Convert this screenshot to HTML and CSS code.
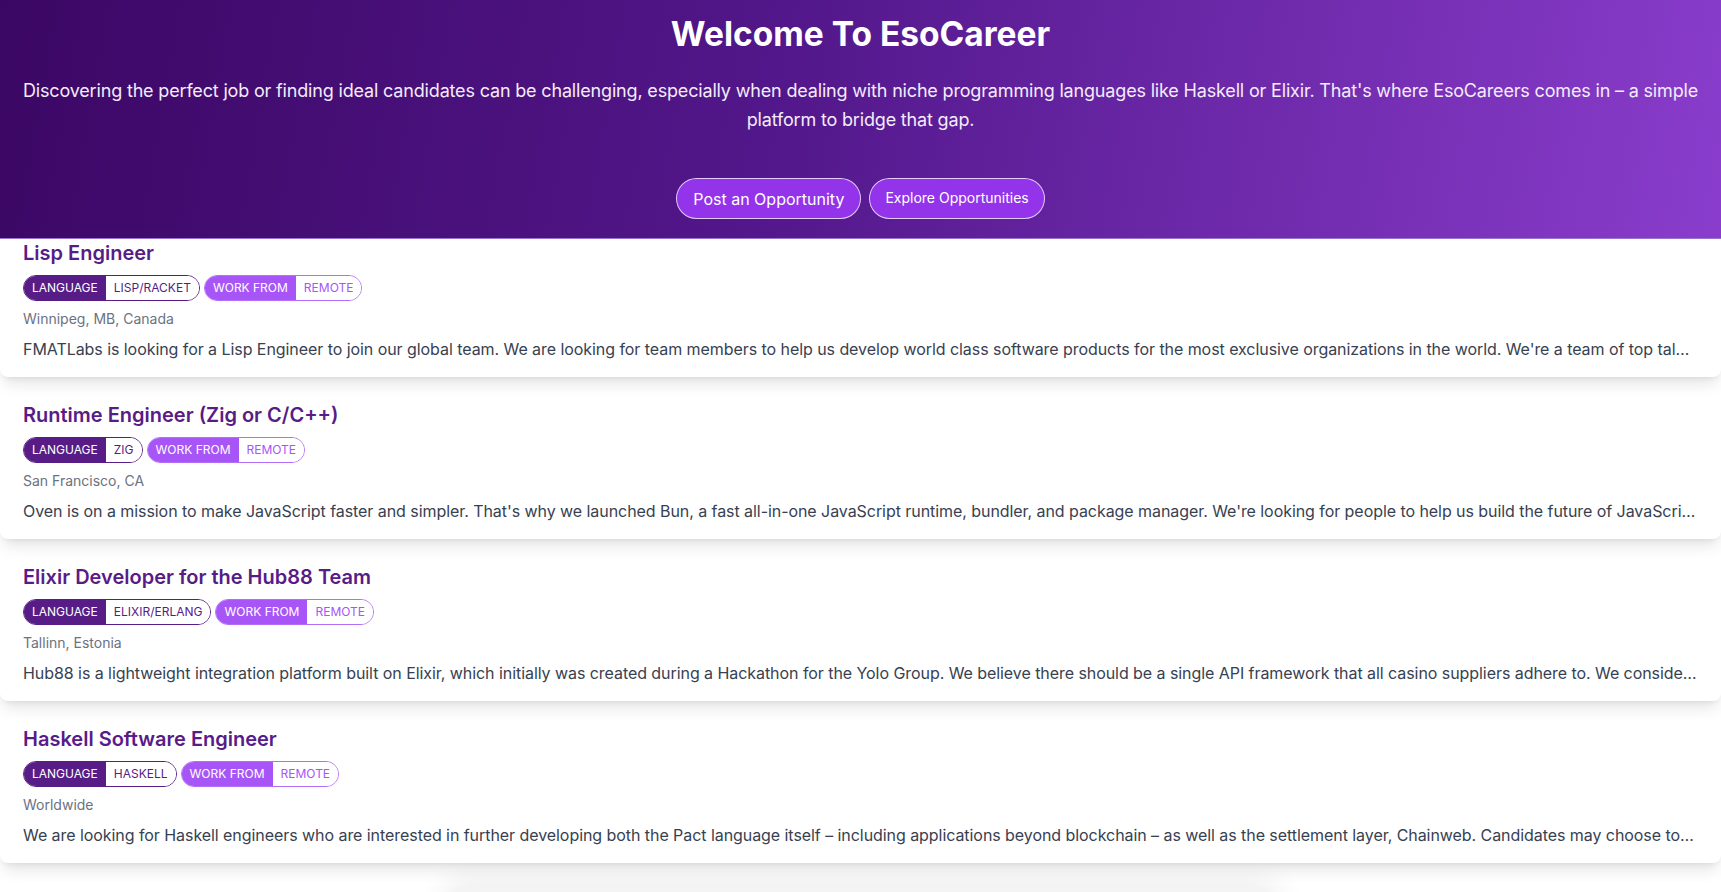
FILE: index.html
```html
<!DOCTYPE html>
<html lang="en">
<head>
<meta charset="utf-8">
<title>EsoCareer</title>
<link rel="stylesheet" href="styles.css">
</head>
<body>
<header class="hero">
  <h1 class="hero-title">Welcome To EsoCareer</h1>
  <p class="hero-text">Discovering the perfect job or finding ideal candidates can be challenging, especially when dealing with niche programming languages like Haskell or Elixir. That's where EsoCareers comes in – a simple platform to bridge that gap.</p>
  <div class="hero-actions">
    <a class="btn btn-post" href="#">Post an Opportunity</a>
    <a class="btn btn-explore" href="#">Explore Opportunities</a>
  </div>
</header>
<main class="jobs">
  <article class="card">
    <h2 class="card-title">Lisp Engineer</h2>
    <div class="tags">
      <span class="tag tag-lang"><span class="tag-key">Language</span><span class="tag-val">Lisp/Racket</span></span>
      <span class="tag tag-work"><span class="tag-key">Work from</span><span class="tag-val">Remote</span></span>
    </div>
    <div class="location">Winnipeg, MB, Canada</div>
    <p class="desc">FMATLabs is looking for a Lisp Engineer to join our global team. We are looking for team members to help us develop world class software products for the most exclusive organizations in the world. We're a team of top talented engineers and designers working remotely.</p>
  </article>
  <article class="card">
    <h2 class="card-title">Runtime Engineer (Zig or C/C++)</h2>
    <div class="tags">
      <span class="tag tag-lang"><span class="tag-key">Language</span><span class="tag-val">Zig</span></span>
      <span class="tag tag-work"><span class="tag-key">Work from</span><span class="tag-val">Remote</span></span>
    </div>
    <div class="location">San Francisco, CA</div>
    <p class="desc">Oven is on a mission to make JavaScript faster and simpler. That's why we launched Bun, a fast all-in-one JavaScript runtime, bundler, and package manager. We're looking for people to help us build the future of JavaScript tooling.</p>
  </article>
  <article class="card">
    <h2 class="card-title">Elixir Developer for the Hub88 Team</h2>
    <div class="tags">
      <span class="tag tag-lang"><span class="tag-key">Language</span><span class="tag-val">Elixir/Erlang</span></span>
      <span class="tag tag-work"><span class="tag-key">Work from</span><span class="tag-val">Remote</span></span>
    </div>
    <div class="location">Tallinn, Estonia</div>
    <p class="desc">Hub88 is a lightweight integration platform built on Elixir, which initially was created during a Hackathon for the Yolo Group. We believe there should be a single API framework that all casino suppliers adhere to. We consider this our mission.</p>
  </article>
  <article class="card">
    <h2 class="card-title">Haskell Software Engineer</h2>
    <div class="tags">
      <span class="tag tag-lang"><span class="tag-key">Language</span><span class="tag-val">Haskell</span></span>
      <span class="tag tag-work"><span class="tag-key">Work from</span><span class="tag-val">Remote</span></span>
    </div>
    <div class="location">Worldwide</div>
    <p class="desc">We are looking for Haskell engineers who are interested in further developing both the Pact language itself – including applications beyond blockchain – as well as the settlement layer, Chainweb. Candidates may choose to work on either.</p>
  </article>
  <div class="more"></div>
</main>
</body>
</html>
```
FILE: styles.css
```css
* { box-sizing: border-box; }
html, body { margin: 0; padding: 0; }
body {
  font-family: Inter, "Noto Sans", "Liberation Sans", sans-serif;
  background: #ffffff;
  color: #374151;
  overflow: hidden;
}
.hero {
  background: linear-gradient(100deg, #3b0764 0%, #52178a 45%, #8a3dcc 100%);
  color: #ffffff;
  text-align: center;
  padding: 14px 14px 19px;
  border-bottom: 1px solid #9b72cf;
}
.hero-title {
  margin: 0;
  font-size: 33.5px;
  line-height: 40px;
  font-weight: 700;
}
.hero-text {
  margin: 23px 0 0;
  font-size: 18px;
  line-height: 28.5px;
  letter-spacing: -0.17px;
  color: #f3ecfb;
}
.hero-actions {
  margin-top: 44px;
  display: flex;
  justify-content: center;
  gap: 8px;
}
.btn {
  display: flex;
  align-items: center;
  height: 41px;
  border-radius: 9999px;
  background: #9333ea;
  border: 1px solid rgba(255, 255, 255, 0.75);
  color: #ffffff;
  text-decoration: none;
}
.btn-post {
  font-size: 16px;
  padding: 0 16px;
}
.btn-explore {
  font-size: 14px;
  padding: 0 15px 3px;
}
.jobs {
  display: flex;
  flex-direction: column;
  gap: 24px;
}
.card {
  background: #ffffff;
  border-radius: 8px;
  padding: 0 23px 16px;
  box-shadow: 0 10px 15px -3px rgba(0, 0, 0, 0.1), 0 4px 6px -4px rgba(0, 0, 0, 0.1);
  position: relative;
}
.card-title {
  margin: 0;
  font-size: 20px;
  line-height: 28px;
  font-weight: 600;
  color: #581c87;
}
.tags {
  margin-top: 8px;
  display: flex;
  gap: 4px;
}
.tag {
  display: inline-flex;
  border-radius: 9999px;
  overflow: hidden;
  font-size: 12px;
  line-height: 24px;
  text-transform: uppercase;
}
.tag-key, .tag-val { padding: 0 8px; }
.tag-lang { border: 1px solid #581c87; }
.tag-lang .tag-key { background: #581c87; color: #ffffff; }
.tag-lang .tag-val { background: #ffffff; color: #581c87; }
.tag-work { border: 1px solid #b26ef8; }
.tag-work .tag-key { background: #a855f7; color: #ffffff; }
.tag-work .tag-val { background: #ffffff; color: #a855f7; }
.location {
  margin-top: 8px;
  font-size: 14px;
  line-height: 20px;
  color: #6b7280;
}
.desc {
  margin: 8px 0 0;
  font-size: 16px;
  line-height: 24px;
  letter-spacing: -0.06px;
  color: #374151;
  white-space: nowrap;
  overflow: hidden;
  text-overflow: ellipsis;
}
.more {
  width: 820px;
  height: 80px;
  margin: 0 auto;
  background: #f4f4f4;
  box-shadow: 0 0 30px 6px rgba(0, 0, 0, 0.08);
  border-radius: 12px;
}
```
